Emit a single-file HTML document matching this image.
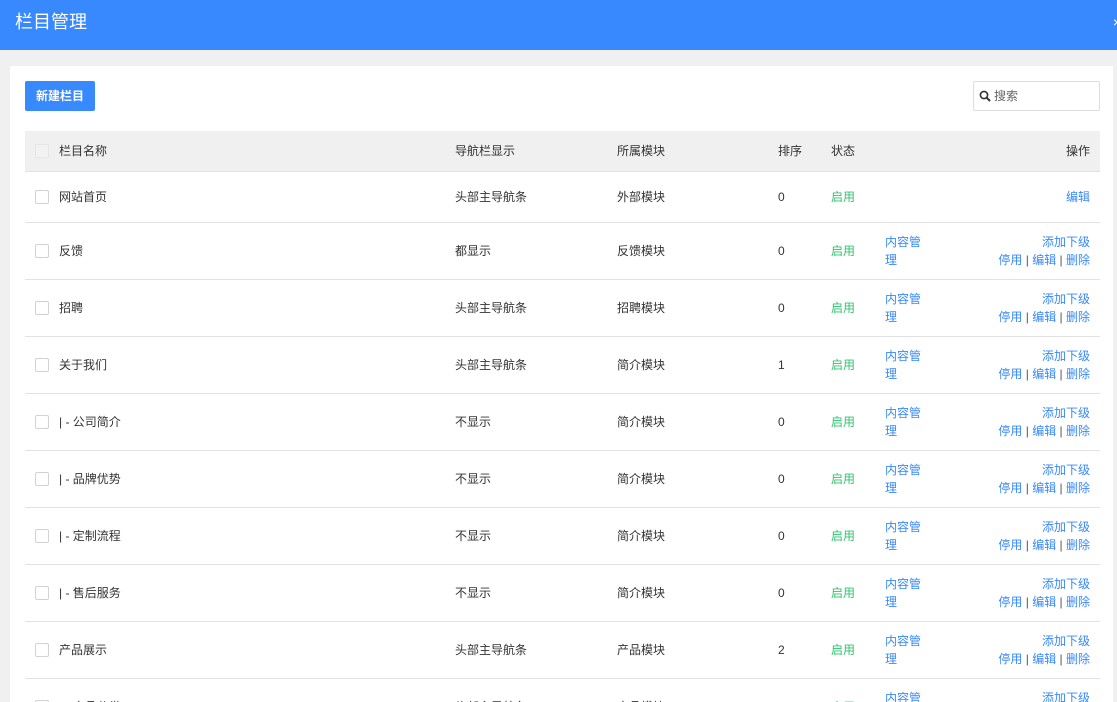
<!DOCTYPE html>
<html style="overflow:hidden;height:702px"><head><meta charset="utf-8"><style>
*{margin:0;padding:0;box-sizing:border-box}
body{width:1117px;height:702px;overflow:hidden;background:#f0f0f0;font-family:"Liberation Sans","Noto Sans CJK SC",sans-serif;font-size:12px;color:#333;position:relative}
.hd{position:absolute;left:0;top:0;width:1117px;height:50px;background:#3789fd;color:#fff;font-size:18px;line-height:44px;padding-left:15px}
.hd .x{position:absolute;right:-4px;top:0;font-size:14px}
.panel{position:absolute;left:10px;top:66px;width:1103px;height:636px;background:#fff;overflow:hidden}
.btn{position:absolute;left:15px;top:15px;width:70px;height:30px;background:#3789fd;color:#fff;border-radius:2px;text-align:center;line-height:30px;font-size:12px;font-weight:bold}
.search{position:absolute;left:963px;top:15px;width:127px;height:30px;border:1px solid #ddd;border-radius:2px;color:#666;line-height:28px;padding-left:20px}
.search svg{position:absolute;left:5px;top:8px}
.row{position:absolute;left:15px;width:1075px;border-bottom:1px solid #e2e2e2}
.row div{position:absolute}
.th{top:65px;height:41px;background:#f0f0f0;line-height:40px}
.cb{left:10px;width:14px;height:14px;border:1px solid #d2d2d2;border-radius:2px;background:#fff}
.th .cb{background:#f2f2f2;border-color:#e6e6e6;top:13px}
.c1{left:34px}.c2{left:430px}.c3{left:592px}.c4{left:753px}.c5{left:806px}
.g{color:#2fc46e}.b{color:#3789fd}
.c6{left:860px;width:40px;line-height:18px;color:#3789fd}
.op{right:10px;text-align:right;line-height:18px;color:#3789fd}
.op span{color:#555}
</style></head><body>
<div class="hd">栏目管理<span class="x">×</span></div>
<div class="panel">
<div class="btn">新建栏目</div>
<div class="search"><svg width="12" height="12" viewBox="0 0 12 12"><circle cx="5" cy="5" r="3.6" fill="none" stroke="#333" stroke-width="1.6"/><path d="M7.6 7.6L11 11" stroke="#333" stroke-width="2"/></svg>搜索</div>
<div class="row th"><div class="cb"></div><div class="c1">栏目名称</div><div class="c2">导航栏显示</div><div class="c3">所属模块</div><div class="c4">排序</div><div class="c5">状态</div><div class="op" style="line-height:40px;color:#333">操作</div></div>
<div class="row" style="top:106px;height:51px;line-height:50px"><div class="cb" style="top:18px"></div><div class="c1">网站首页</div><div class="c2">头部主导航条</div><div class="c3">外部模块</div><div class="c4">0</div><div class="c5 g">启用</div><div class="op" style="line-height:50px">编辑</div></div>
</div>
<script>
var d=[["反馈","都显示","反馈模块","0"],["招聘","头部主导航条","招聘模块","0"],["关于我们","头部主导航条","简介模块","1"],["| - 公司简介","不显示","简介模块","0"],["| - 品牌优势","不显示","简介模块","0"],["| - 定制流程","不显示","简介模块","0"],["| - 售后服务","不显示","简介模块","0"],["产品展示","头部主导航条","产品模块","2"],["| - 产品分类","头部主导航条","产品模块","0"]];
var h="";d.forEach(function(r,i){var t=157+57*i;
h+='<div class="row" style="top:'+t+'px;height:57px;line-height:57px"><div class="cb" style="top:21px"></div><div class="c1">'+r[0]+'</div><div class="c2">'+r[1]+'</div><div class="c3">'+r[2]+'</div><div class="c4">'+r[3]+'</div><div class="c5 g">启用</div><div class="c6" style="top:10px">内容管理</div><div class="op" style="top:10px">添加下级<br>停用 <span>|</span> 编辑 <span>|</span> 删除</div></div>';});
document.querySelector('.panel').insertAdjacentHTML('beforeend',h);
</script>
</body></html>
